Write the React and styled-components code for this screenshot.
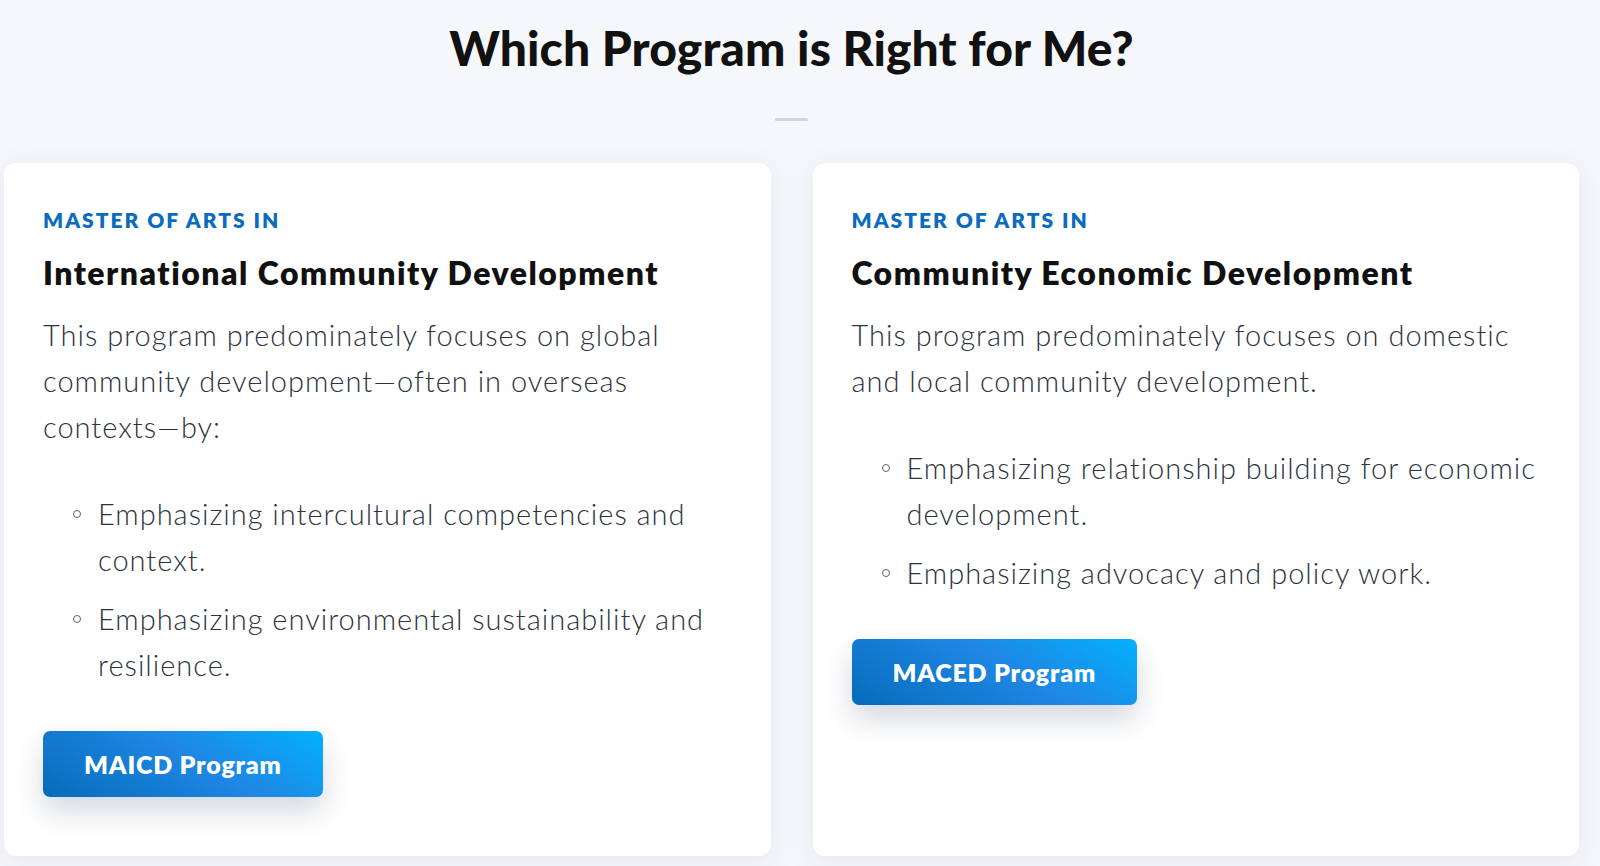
import React from "react";
import styled, { createGlobalStyle } from "styled-components";

const GlobalStyle = createGlobalStyle`
  html, body {
    margin: 0;
    padding: 0;
    background: #f6f7fb;
  }
  body {
    font-family: Lato, "Open Sans", sans-serif;
    -webkit-font-smoothing: antialiased;
  }
`;

const Section = styled.section`
  min-height: 866px;
  box-sizing: border-box;
  padding: 18px 21px 10px 4px;
  background: #f6f7fb;
`;

const Title = styled.h2`
  margin: 0;
  text-align: center;
  font-size: 48px;
  line-height: 60px;
  font-weight: 900;
  color: #111;
  letter-spacing: 0.1px;
`;

const Divider = styled.div`
  width: 33px;
  height: 3px;
  margin: 40px auto 42px;
  background: #d3d4d8;
  border-radius: 2px;
`;

const Cards = styled.div`
  display: grid;
  grid-template-columns: 1fr 1fr;
  gap: 42px;
`;

const Card = styled.article`
  background: #fff;
  border-radius: 12px;
  box-shadow: 0 6px 30px rgba(40, 48, 80, 0.08);
  padding: 45px 39px 59px;
  display: flex;
  flex-direction: column;
  align-items: flex-start;
`;

const Eyebrow = styled.div`
  font-size: 21px;
  line-height: 24px;
  font-weight: 800;
  letter-spacing: 2px;
  color: #0b6cbd;
  text-transform: uppercase;
`;

const ProgramName = styled.h3`
  margin: 21px 0 0;
  font-size: 32px;
  line-height: 40px;
  font-weight: 800;
  color: #111;
  letter-spacing: 1.5px;
`;

const Lead = styled.p`
  margin: 19px 0 0;
  font-size: 29px;
  line-height: 46px;
  font-weight: 300;
  color: #2c3340;
  letter-spacing: 1px;
`;

const List = styled.ul`
  margin: 41px 0 0;
  padding: 0 0 0 55px;
  list-style: none;
`;

const Item = styled.li`
  position: relative;
  font-size: 29px;
  line-height: 46px;
  font-weight: 300;
  color: #2c3340;
  letter-spacing: 1px;
  & + & {
    margin-top: 13px;
  }
  &::before {
    content: "";
    position: absolute;
    left: -25px;
    top: 19px;
    width: 6px;
    height: 6px;
    border: 1.2px solid #5a606a;
    border-radius: 50%;
  }
`;

const Button = styled.a`
  margin-top: 43px;
  display: inline-flex;
  align-items: center;
  justify-content: center;
  height: 66px;
  padding: 0 41px;
  border-radius: 7px;
  background: linear-gradient(30deg, #056cba 0%, #1f86e4 55%, #03b1fd 100%);
  box-shadow: 0 14px 28px rgba(20, 40, 80, 0.18);
  color: #fff;
  font-size: 25px;
  font-weight: 800;
  text-decoration: none;
  letter-spacing: 0.8px;
`;

const programs = [
  {
    name: "International Community Development",
    lead: "This program predominately focuses on global community development\u2014often in overseas contexts\u2014by:",
    points: [
      "Emphasizing intercultural competencies and context.",
      "Emphasizing environmental sustainability and resilience.",
    ],
    cta: "MAICD Program",
  },
  {
    name: "Community Economic Development",
    lead: "This program predominately focuses on domestic and local community development.",
    points: [
      "Emphasizing relationship building for economic development.",
      "Emphasizing advocacy and policy work.",
    ],
    cta: "MACED Program",
  },
];

export default function App() {
  return (
    <>
      <GlobalStyle />
      <Section>
        <Title>Which Program is Right for Me?</Title>
        <Divider />
        <Cards>
          {programs.map((p) => (
            <Card key={p.cta}>
              <Eyebrow>Master of Arts in</Eyebrow>
              <ProgramName>{p.name}</ProgramName>
              <Lead>{p.lead}</Lead>
              <List>
                {p.points.map((pt) => (
                  <Item key={pt}>{pt}</Item>
                ))}
              </List>
              <Button href="#">{p.cta}</Button>
            </Card>
          ))}
        </Cards>
      </Section>
    </>
  );
}
